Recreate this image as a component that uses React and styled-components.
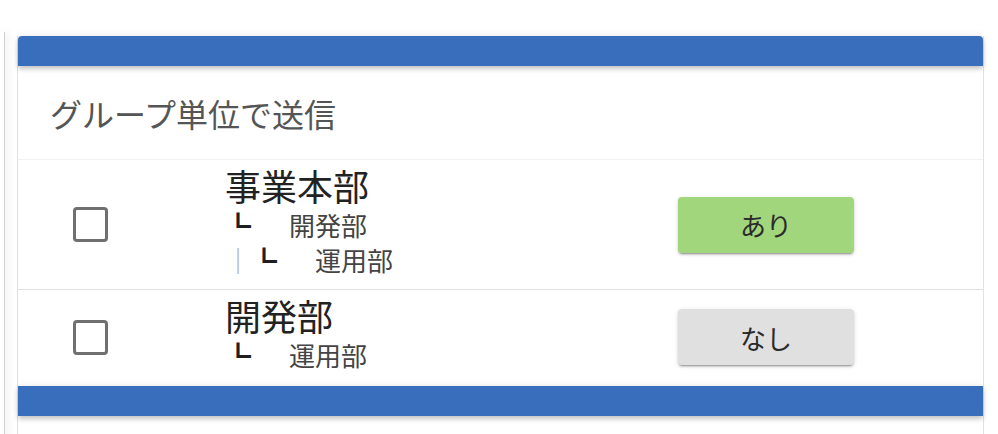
import React from "react";
import styled, { createGlobalStyle } from "styled-components";

const Global = createGlobalStyle`
  html, body { margin: 0; padding: 0; background: #ffffff; }
  body { font-family: "Noto Sans CJK JP", "Noto Sans", sans-serif; }
`;

const Page = styled.div`
  display: flex;
  align-items: flex-start;
  height: 434px;
  overflow: hidden;
`;

const NeighbourEdge = styled.div`
  width: 4px;
  height: 420px;
  margin-top: 32px;
  border-right: 1px solid #d0d0d0;
  box-shadow: 3px 0 8px rgba(0, 0, 0, 0.07);
`;

const Card = styled.div`
  margin-left: 12px;
  margin-top: 36px;
  width: 965px;
  border-left: 1px solid #e2e2e2;
  border-right: 1px solid #e2e2e2;
  background: #fff;
  display: flex;
  flex-direction: column;
`;

const Bar = styled.div`
  height: 30px;
  background: #396ebd;
  border-radius: ${(p) => (p.$top ? "4px 4px 0 0" : "0")};
  box-shadow: 0 3px 5px rgba(0, 0, 0, 0.22), 0 -2px 8px rgba(0, 0, 0, 0.05);
  position: relative;
  z-index: 1;
`;

const Title = styled.div`
  height: 93px;
  padding-left: 32px;
  display: flex;
  align-items: center;
  font-size: 32px;
  color: #555;
  border-bottom: 1px solid #f2f2f2;
`;

const Row = styled.div`
  display: grid;
  grid-template-columns: 207px 1fr 176px;
  align-items: center;
  padding: 4px 129px ${(p) => (p.$last ? "6px" : "4px")} 0;
  border-bottom: ${(p) => (p.$last ? "none" : "1px solid #e0e0e0")};
`;

const CheckCell = styled.div`
  padding-left: 55px;
  display: flex;
  align-items: center;
`;

const CheckBox = styled.span`
  display: block;
  width: 29px;
  height: 29px;
  border: 3px solid #707070;
  border-radius: 4px;
`;

const NameBlock = styled.div`
  display: flex;
  flex-direction: column;
  padding-bottom: 8px;
`;

const MainName = styled.div`
  font-size: 36px;
  line-height: 43px;
  color: #222;
`;

const SubLine = styled.div`
  display: flex;
  align-items: center;
  height: 35px;
  font-size: 26px;
  line-height: 35px;
  color: #444;
`;

const Mark = styled.span`
  color: ${(p) => (p.$light ? "#a8a8a8" : "#1e1e1e")};
`;

const SubName = styled.span`
  margin-left: 38px;
`;

const ToggleButton = styled.button`
  width: 176px;
  height: 56px;
  border: none;
  border-radius: 4px;
  font-family: inherit;
  font-size: 26px;
  color: #2a2a2a;
  background: ${(p) => (p.$on ? "#a1d67d" : "#e0e0e0")};
  box-shadow: 0 3px 1px -2px rgba(0, 0, 0, 0.2), 0 2px 2px 0 rgba(0, 0, 0, 0.14),
    0 1px 5px 0 rgba(0, 0, 0, 0.12);
  padding: 0;
  cursor: pointer;
`;

const Spacer = styled.div`
  height: 40px;
`;

const groups = [
  {
    name: "事業本部",
    on: true,
    lines: [
      { marks: [{ c: "┗" }], name: "開発部" },
      { marks: [{ c: "│", light: true }, { c: "┗" }], name: "運用部" },
    ],
  },
  {
    name: "開発部",
    on: false,
    lines: [{ marks: [{ c: "┗" }], name: "運用部" }],
  },
];

export default function App() {
  return (
    <>
      <Global />
      <Page>
        <NeighbourEdge />
        <Card>
          <Bar $top />
          <Title>グループ単位で送信</Title>
          {groups.map((g, i) => (
            <Row key={i} $last={i === groups.length - 1}>
              <CheckCell>
                <CheckBox />
              </CheckCell>
              <NameBlock>
                <MainName>{g.name}</MainName>
                {g.lines.map((l, j) => (
                  <SubLine key={j}>
                    {l.marks.map((m, k) => (
                      <Mark key={k} $light={m.light}>
                        {m.c}
                      </Mark>
                    ))}
                    <SubName>{l.name}</SubName>
                  </SubLine>
                ))}
              </NameBlock>
              <div>
                <ToggleButton $on={g.on}>{g.on ? "あり" : "なし"}</ToggleButton>
              </div>
            </Row>
          ))}
          <Bar />
          <Spacer />
        </Card>
      </Page>
    </>
  );
}
